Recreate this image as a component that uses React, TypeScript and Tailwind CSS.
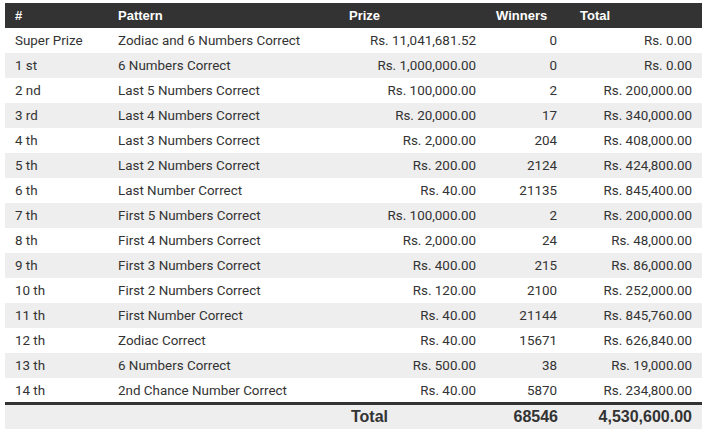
const rows: [string, string, string, string, string][] = [
  ["Super Prize", "Zodiac and 6 Numbers Correct", "Rs. 11,041,681.52", "0", "Rs. 0.00"],
  ["1 st", "6 Numbers Correct", "Rs. 1,000,000.00", "0", "Rs. 0.00"],
  ["2 nd", "Last 5 Numbers Correct", "Rs. 100,000.00", "2", "Rs. 200,000.00"],
  ["3 rd", "Last 4 Numbers Correct", "Rs. 20,000.00", "17", "Rs. 340,000.00"],
  ["4 th", "Last 3 Numbers Correct", "Rs. 2,000.00", "204", "Rs. 408,000.00"],
  ["5 th", "Last 2 Numbers Correct", "Rs. 200.00", "2124", "Rs. 424,800.00"],
  ["6 th", "Last Number Correct", "Rs. 40.00", "21135", "Rs. 845,400.00"],
  ["7 th", "First 5 Numbers Correct", "Rs. 100,000.00", "2", "Rs. 200,000.00"],
  ["8 th", "First 4 Numbers Correct", "Rs. 2,000.00", "24", "Rs. 48,000.00"],
  ["9 th", "First 3 Numbers Correct", "Rs. 400.00", "215", "Rs. 86,000.00"],
  ["10 th", "First 2 Numbers Correct", "Rs. 120.00", "2100", "Rs. 252,000.00"],
  ["11 th", "First Number Correct", "Rs. 40.00", "21144", "Rs. 845,760.00"],
  ["12 th", "Zodiac Correct", "Rs. 40.00", "15671", "Rs. 626,840.00"],
  ["13 th", "6 Numbers Correct", "Rs. 500.00", "38", "Rs. 19,000.00"],
  ["14 th", "2nd Chance Number Correct", "Rs. 40.00", "5870", "Rs. 234,800.00"],
];

export default function App() {
  return (
    <div className="w-[706px] h-[432px] overflow-hidden bg-white pt-[3px] pl-[5px]">
      <table className="table-fixed border-collapse w-[697px] text-[#333] font-['Roboto',sans-serif] text-[13.4px]">
        <colgroup>
          <col className="w-[103px]" />
          <col className="w-[231px]" />
          <col className="w-[147px]" />
          <col className="w-[84px]" />
          <col className="w-[132px]" />
        </colgroup>
        <thead>
          <tr className="bg-[#333] text-white h-[25px] font-['Liberation_Sans',Arial,sans-serif] font-bold text-[13px]">
            <th className="text-left pl-[10px] py-0">#</th>
            <th className="text-left pl-[10px] py-0">Pattern</th>
            <th className="text-left pl-[10px] py-0">Prize</th>
            <th className="text-left pl-[10px] py-0">Winners</th>
            <th className="text-left pl-[10px] py-0">Total</th>
          </tr>
        </thead>
        <tbody>
          {rows.map((r, i) => (
            <tr key={i} className={`h-[25px] ${i % 2 === 1 ? "bg-[#eeeeee]" : "bg-white"}`}>
              <td className="pl-[10px] pt-[2px] pb-0">{r[0]}</td>
              <td className="pl-[10px] pt-[2px] pb-0">{r[1]}</td>
              <td className="pr-[10px] pt-[2px] pb-0 text-right">{r[2]}</td>
              <td className="pr-[13px] pt-[2px] pb-0 text-right">{r[3]}</td>
              <td className="pr-[10px] pt-[2px] pb-0 text-right">{r[4]}</td>
            </tr>
          ))}
        </tbody>
        <tfoot>
          <tr className="h-[26px] bg-[#eeeeee] border-t-[3px] border-[#333] font-['Liberation_Sans',Arial,sans-serif] font-bold text-[16px]">
            <td></td>
            <td></td>
            <td className="pl-[12px] py-0">Total</td>
            <td className="pr-[12px] py-0 text-right">68546</td>
            <td className="pr-[10px] py-0 text-right">4,530,600.00</td>
          </tr>
        </tfoot>
      </table>
    </div>
  );
}
